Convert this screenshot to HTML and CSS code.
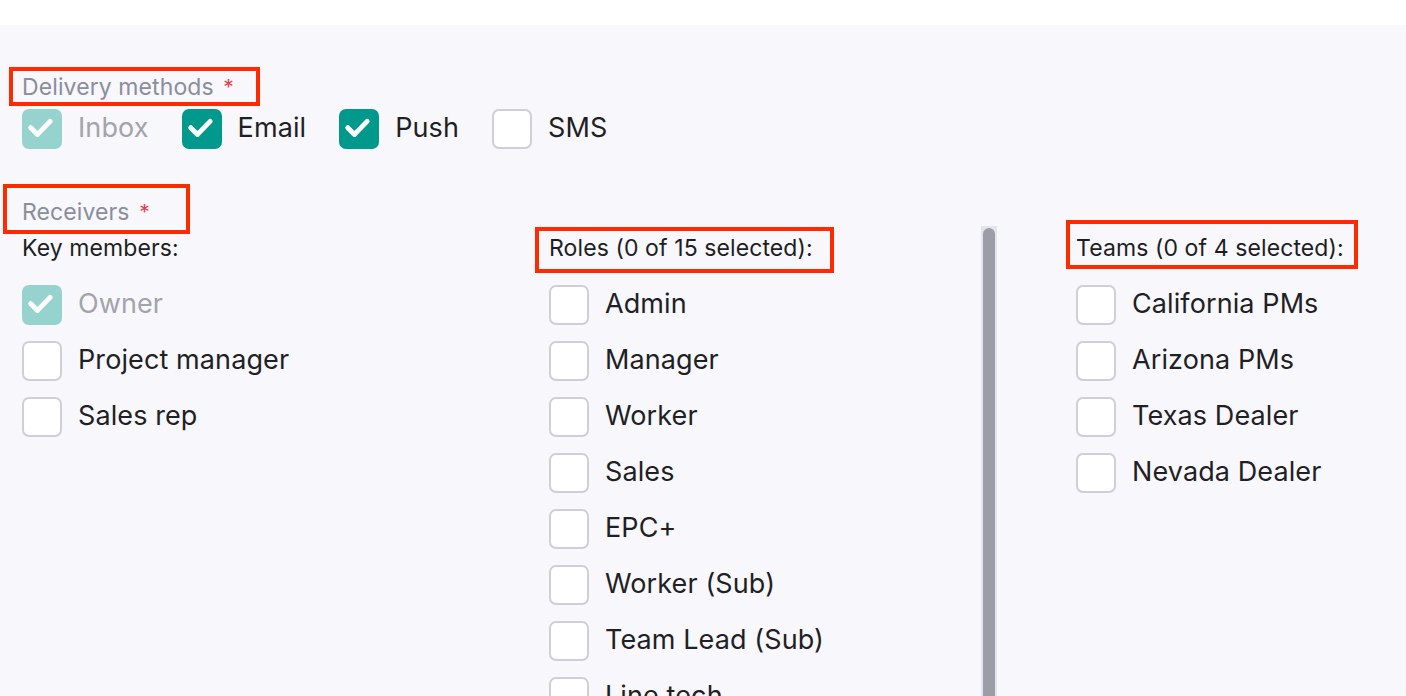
FILE: index.html
```html
<!DOCTYPE html>
<html lang="en">
<head>
<meta charset="utf-8">
<title>Notification settings</title>
<link rel="stylesheet" href="styles.css">
</head>
<body>
<div class="topbar"></div>
<main class="page">
  <section class="field">
    <div class="field-label">Delivery methods <span class="req">*</span></div>
    <div class="options">
      <label class="opt disabled"><span class="box checked"><svg viewBox="0 0 40 40"><path d="M9.5 20.5 L17 28 L31 13.5"/></svg></span><span class="txt">Inbox</span></label>
      <label class="opt"><span class="box checked"><svg viewBox="0 0 40 40"><path d="M9.5 20.5 L17 28 L31 13.5"/></svg></span><span class="txt">Email</span></label>
      <label class="opt"><span class="box checked"><svg viewBox="0 0 40 40"><path d="M9.5 20.5 L17 28 L31 13.5"/></svg></span><span class="txt">Push</span></label>
      <label class="opt"><span class="box"></span><span class="txt">SMS</span></label>
    </div>
  </section>

  <section class="field receivers">
    <div class="field-label tight">Receivers <span class="req">*</span></div>
    <div class="cols">
      <div class="col">
        <div class="col-head">Key members:</div>
        <div class="list">
          <label class="opt disabled"><span class="box checked"><svg viewBox="0 0 40 40"><path d="M9.5 20.5 L17 28 L31 13.5"/></svg></span><span class="txt">Owner</span></label>
          <label class="opt"><span class="box"></span><span class="txt">Project manager</span></label>
          <label class="opt"><span class="box"></span><span class="txt">Sales rep</span></label>
        </div>
      </div>
      <div class="col-scroll">
        <div class="col scroll-body">
          <div class="col-head">Roles (0 of 15 selected):</div>
          <div class="list">
            <label class="opt"><span class="box"></span><span class="txt">Admin</span></label>
            <label class="opt"><span class="box"></span><span class="txt">Manager</span></label>
            <label class="opt"><span class="box"></span><span class="txt">Worker</span></label>
            <label class="opt"><span class="box"></span><span class="txt">Sales</span></label>
            <label class="opt"><span class="box"></span><span class="txt">EPC+</span></label>
            <label class="opt"><span class="box"></span><span class="txt">Worker (Sub)</span></label>
            <label class="opt"><span class="box"></span><span class="txt">Team Lead (Sub)</span></label>
            <label class="opt"><span class="box"></span><span class="txt">Line tech</span></label>
            <label class="opt"><span class="box"></span><span class="txt">Installer</span></label>
            <label class="opt"><span class="box"></span><span class="txt">Electrician</span></label>
            <label class="opt"><span class="box"></span><span class="txt">Surveyor</span></label>
            <label class="opt"><span class="box"></span><span class="txt">Designer</span></label>
            <label class="opt"><span class="box"></span><span class="txt">Inspector</span></label>
            <label class="opt"><span class="box"></span><span class="txt">Accountant</span></label>
            <label class="opt"><span class="box"></span><span class="txt">Support</span></label>
          </div>
        </div>
        <div class="scrollbar"><div class="thumb"></div></div>
      </div>
      <div class="col">
        <div class="col-head">Teams (0 of 4 selected):</div>
        <div class="list">
          <label class="opt"><span class="box"></span><span class="txt">California PMs</span></label>
          <label class="opt"><span class="box"></span><span class="txt">Arizona PMs</span></label>
          <label class="opt"><span class="box"></span><span class="txt">Texas Dealer</span></label>
          <label class="opt"><span class="box"></span><span class="txt">Nevada Dealer</span></label>
        </div>
      </div>
    </div>
  </section>
</main>

<div class="mark mark-1"></div>
<div class="mark mark-2"></div>
<div class="mark mark-3"></div>
<div class="mark mark-4"></div>
</body>
</html>
```

FILE: styles.css
```css
html, body {
  margin: 0;
  padding: 0;
  overflow: hidden;
  height: 100%;
}
body {
  background: #f7f7fc;
  font-family: "Inter", "Noto Sans", sans-serif;
  color: #1f1f24;
  position: relative;
}
.topbar {
  height: 25px;
  background: #ffffff;
}
.page {
  padding: 48px 0 0 22px;
}
.field-label {
  font-size: 23px;
  line-height: 28px;
  color: #898e9a;
  letter-spacing: 0.1px;
}
.field-label.tight {
  line-height: 27px;
}
.req {
  color: #e0434f;
  font-size: 21px;
  margin-left: 3px;
}
.options {
  display: flex;
  gap: 33px;
  margin-top: 7px;
}
.receivers {
  margin-top: 50px;
}
.opt {
  display: flex;
  align-items: center;
  gap: 16px;
  height: 40px;
  font-size: 27px;
  line-height: 40px;
  letter-spacing: 0.1px;
}
.opt .txt {
  margin-top: -2px;
}
.opt.disabled .txt {
  color: #a3a3ab;
}
.box {
  box-sizing: border-box;
  width: 40px;
  height: 40px;
  flex: none;
  border: 2px solid #cfcfd9;
  border-radius: 7px;
  background: #ffffff;
  display: flex;
}
.box.checked {
  background: #00998c;
  border-color: #00998c;
}
.opt.disabled .box.checked {
  background: #96d3cf;
  border-color: #96d3cf;
}
.box svg {
  width: 36px;
  height: 36px;
}
.box svg path {
  fill: none;
  stroke: #ffffff;
  stroke-width: 5.5;
  stroke-linecap: round;
  stroke-linejoin: round;
  transform: translate(-2px, -2px);
}
.cols {
  display: grid;
  grid-template-columns: 448px 448px 1fr;
  column-gap: 79px;
}
.col {
  padding-top: 10px;
}
.col-head {
  font-size: 23px;
  line-height: 24px;
  color: #1e1e22;
  letter-spacing: 0.1px;
}
.list {
  margin-top: 25px;
  display: flex;
  flex-direction: column;
  gap: 16px;
}
.col-scroll {
  display: flex;
  height: 800px;
  overflow: hidden;
}
.scroll-body {
  flex: 1;
  min-width: 0;
}
.scrollbar {
  flex: none;
  width: 16px;
  background: #e4e4ec;
  padding: 2px;
  box-sizing: border-box;
  display: flex;
}
.thumb {
  flex: 1;
  height: 760px;
  background: #9d9da8;
  border-radius: 6px;
}
.mark {
  position: absolute;
  box-sizing: border-box;
  border: 4px solid #ff2a00;
  pointer-events: none;
}
.mark-1 { left: 9px; top: 67px; width: 251px; height: 39px; }
.mark-2 { left: 3px; top: 184px; width: 187px; height: 50px; }
.mark-3 { left: 535px; top: 227px; width: 299px; height: 46px; }
.mark-4 { left: 1066px; top: 220px; width: 292px; height: 49px; }
```
